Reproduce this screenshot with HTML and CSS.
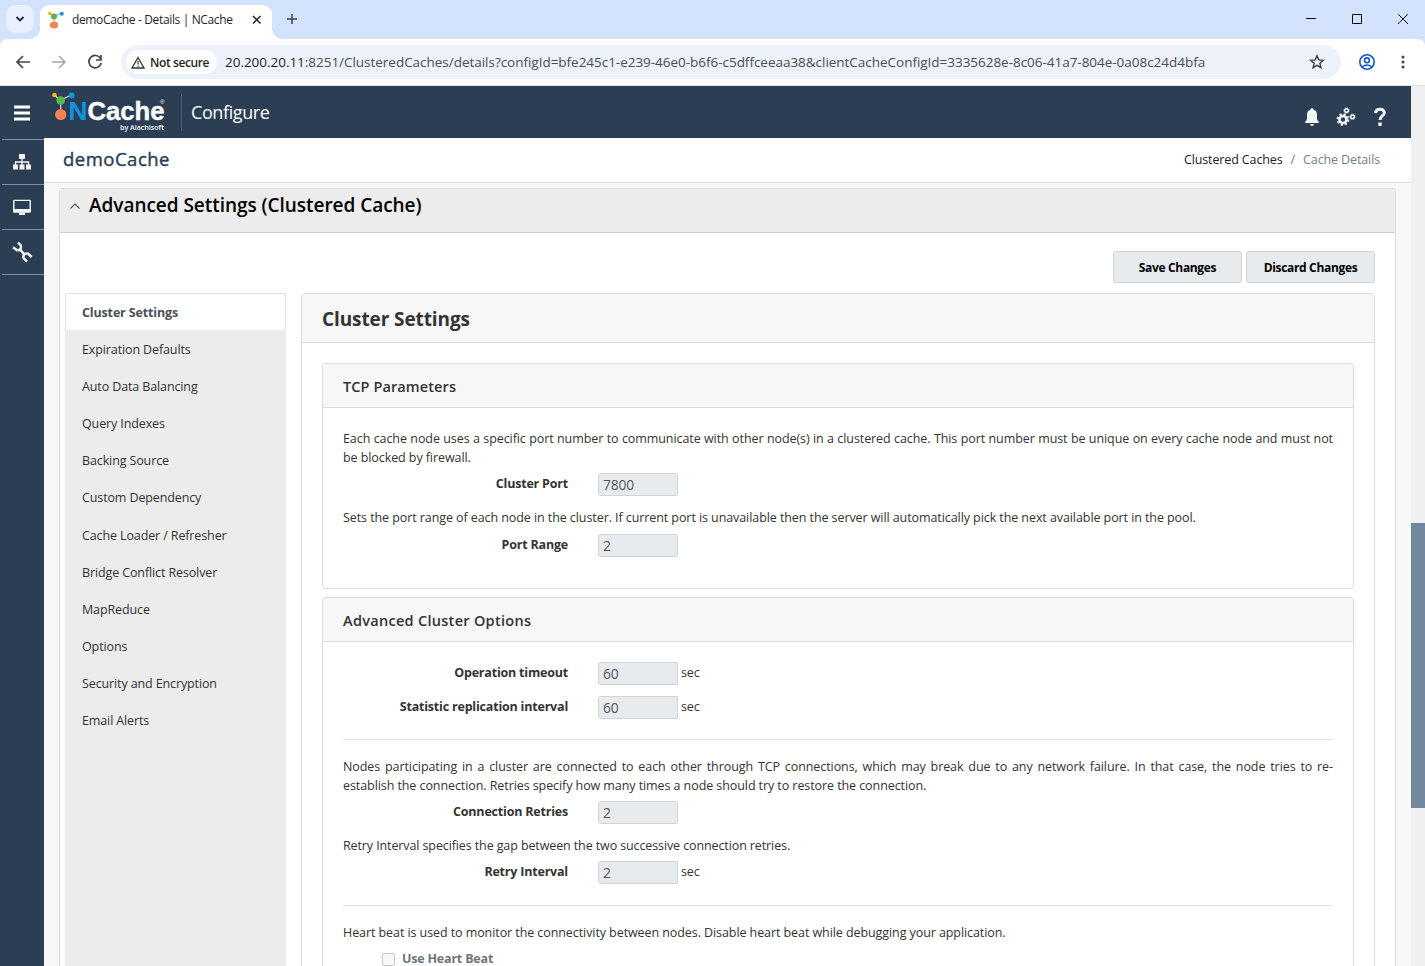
FILE: index.html
```html
<!DOCTYPE html>
<html lang="en">
<head>
<meta charset="utf-8">
<title>demoCache - Details | NCache</title>
<link rel="stylesheet" href="styles.css">
</head>
<body>
<div class="window">
  <div class="tabstrip">
    <div class="tab-search"><svg width="10" height="6" viewBox="0 0 10 6"><path d="M1.5 1l3.5 3.5L8.500 1" fill="none" stroke="#1f2a44" stroke-width="1.8"/></svg></div>
    <div class="tab">
      <svg class="favicon" width="18" height="18" viewBox="0 0 18 18"><path d="M2 2.500L6 5l7-2.500M6 5v8" stroke="#8aa" stroke-width="1" fill="none"/><circle cx="1.800" cy="2.500" r="1.700" fill="#f5b21a"/><circle cx="13.800" cy="2.700" r="2" fill="#1296e0"/><circle cx="6" cy="5.500" r="3" fill="#55b848"/><ellipse cx="6" cy="14" rx="4.200" ry="3.500" fill="#f58551"/></svg>
      <span class="tab-title">demoCache - Details | NCache</span>
      <svg class="tab-close" width="10" height="10" viewBox="0 0 10 10"><path d="M1 1l7.500 7.500M8.500 1L1 8.500" stroke="#222" stroke-width="1.500"/></svg>
    </div>
    <svg class="new-tab" width="12" height="12" viewBox="0 0 12 12"><path d="M6 1v10M1 6h10" stroke="#444" stroke-width="1.500"/></svg>
    <div class="win-buttons">
      <svg width="12" height="12" viewBox="0 0 12 12"><path d="M1 5.500h10" stroke="#000"/></svg>
      <svg width="12" height="12" viewBox="0 0 12 12"><path d="M1.500 1.500h9v9h-9z" fill="none" stroke="#000"/></svg>
      <svg width="12" height="12" viewBox="0 0 12 12"><path d="M1 1l10 10M11 1L1 11" stroke="#000"/></svg>
    </div>
  </div>
  <div class="toolbar">
    <svg class="t-back" width="16" height="16" viewBox="0 0 16 16"><path d="M15 8H2.500M8 2L2 8l6 6" fill="none" stroke="#474747" stroke-width="1.700"/></svg>
    <svg class="t-fwd" width="16" height="16" viewBox="0 0 16 16"><path d="M1 8h12.500M8 2l6 6-6 6" fill="none" stroke="#a5a5a5" stroke-width="1.500"/></svg>
    <svg class="t-reload" width="16" height="16" viewBox="0 0 16 16"><path d="M13.500 4.500A6.200 6.200 0 1 0 14.200 9M14 1v5H9" fill="none" stroke="#474747" stroke-width="1.700"/></svg>
    <div class="omnibox">
      <div class="chip"><svg width="14" height="13" viewBox="0 0 14 13"><path d="M7 1.500L13 12H1z" fill="none" stroke="#333" stroke-width="1.300"/><path d="M7 5v3.500M7 9.500v1.200" stroke="#333" stroke-width="1.200"/></svg><span class="chip-text">Not secure</span></div>
      <span class="url"><b>20.200.20.11</b>:8251/ClusteredCaches/details?configId=bfe245c1-e239-46e0-b6f6-c5dffceeaa38&amp;clientCacheConfigId=3335628e-8c06-41a7-804e-0a08c24d4bfa</span>
      <svg class="star" width="16" height="16" viewBox="0 0 16 16"><path d="M8 1.800l1.800 4.100 4.500.4-3.400 3 1 4.400L8 11.400l-3.900 2.300 1-4.400-3.400-3 4.500-.4z" fill="none" stroke="#444" stroke-width="1.500"/></svg>
    </div>
    <svg class="profile" width="18" height="18" viewBox="0 0 18 18"><g fill="none" stroke="#1558c9" stroke-width="1.600"><circle cx="9" cy="9" r="7.200"/><circle cx="9" cy="7.300" r="2.400"/><path d="M4 14q5-4 10 0"/></g></svg>
    <svg class="kebab" width="4" height="14" viewBox="0 0 4 14"><circle cx="2" cy="2" r="1.500" fill="#444"/><circle cx="2" cy="7" r="1.500" fill="#444"/><circle cx="2" cy="12" r="1.500" fill="#444"/></svg>
  </div>
  <div class="viewport">
    <div class="app">
      <header class="topbar">
        <svg class="burger" width="16" height="16" viewBox="0 0 16 16"><path d="M0 2h16M0 8h16M0 14h16" stroke="#fff" stroke-width="3"/></svg>
        <svg class="logo" width="116" height="42" viewBox="0 0 116 42"><path d="M3 3l6.500 5 11-5M9.700 8v14" stroke="#dce6ea" stroke-width="1.200" fill="none"/><circle cx="3.500" cy="3" r="2.300" fill="#fbb813"/><circle cx="20.500" cy="3.500" r="3" fill="#0d95e0"/><circle cx="9.700" cy="8.500" r="4.300" fill="#57b947"/><circle cx="9.700" cy="22.500" r="5.600" fill="#f58453"/><text class="logo-n" x="17.500" y="27.500" textLength="19" lengthAdjust="spacingAndGlyphs">N</text><text class="logo-cache" x="36.500" y="27.500" textLength="77" lengthAdjust="spacingAndGlyphs">Cache</text><text class="logo-r" x="109" y="11.500">®</text><text class="logo-by" x="69" y="38.300" textLength="44" lengthAdjust="spacingAndGlyphs">by Alachisoft</text></svg>
        <span class="section">Configure</span>
        <div class="top-icons">
          <svg width="16" height="20" viewBox="0 0 16 20"><path d="M8 1c1 0 1.300.6 1.300 1.500C12 3.200 13 5.300 13 8v3.500c0 1.500.8 2.300 2 3.500v1H1v-1c1.200-1.200 2-2 2-3.500V8c0-2.700 1-4.800 3.700-5.500C6.700 1.600 7 1 8 1z" fill="#f4f4f4"/><path d="M6 17h4q-.5 2-2 2t-2-2z" fill="#f4f4f4"/></svg>
          <svg width="20" height="20" viewBox="0 0 20 20"><g fill="none" stroke="#f4f4f4"><circle cx="7" cy="12.500" r="3.500" stroke-width="2.600"/><circle cx="7" cy="12.500" r="5.400" stroke-width="2" stroke-dasharray="2.100 2.140"/><circle cx="10.500" cy="3.500" r="1.800" stroke-width="1.500"/><circle cx="10.500" cy="3.500" r="2.700" stroke-width=".8" stroke-dasharray="1 1.120"/><circle cx="16.500" cy="9.800" r="1.800" stroke-width="1.500"/><circle cx="16.500" cy="9.800" r="2.700" stroke-width=".8" stroke-dasharray="1 1.120"/></g></svg>
          <svg class="help" width="14" height="20" viewBox="0 0 14 20"><path d="M2.500 6.200C2.700 3.500 4.200 2.200 7 2.200c2.600 0 4.300 1.200 4.300 3.500 0 3.400-4.300 3.200-4.300 7.300" fill="none" stroke="#f4f4f4" stroke-width="3"/><path d="M5.300 15.500h3.400v3.400H5.300z" fill="#f4f4f4"/></svg>
        </div>
      </header>
      <div class="below">
        <nav class="rail">
          <div class="rail-item"><svg width="20" height="18" viewBox="0 0 20 18"><path d="M7 1h6v5H7zM1 11.500h5v5H1zM7.500 11.500h5v5h-5zM14 11.500h5v5h-5z" fill="#f4f4f4"/><path d="M10 6v6M3.500 12V9h13v3" fill="none" stroke="#f4f4f4" stroke-width="1.300"/></svg></div>
          <div class="rail-item"><svg width="20" height="18" viewBox="0 0 20 18"><rect x="1" y="1.700" width="18" height="13" rx="1.200" fill="#f4f4f4"/><path d="M2.500 3h15v8h-15z" fill="#2a3e54"/><path d="M7 14.500h6v2.500H7z" fill="#f4f4f4"/></svg></div>
          <div class="rail-item"><svg width="22" height="22" viewBox="0 0 22 22"><g fill="none" stroke="#f4f4f4" stroke-width="2.500"><path d="M7 1.500L9.800 4.500Q10.500 6.500 9.500 8T6 9.300L2 6.200"/><path d="M9 8.500l4 4.500"/><path d="M20.700 16L17 12.700Q15 12 13.500 13.300T12.500 17L16 20.700"/></g></svg></div>
        </nav>
        <main class="content">
          <div class="crumbs"><h1>demoCache</h1><div class="trail"><span class="dark">Clustered Caches</span><span class="slash">/</span><span class="cur">Cache Details</span></div></div>
          <section class="panel">
            <div class="panel-head"><svg width="12" height="8" viewBox="0 0 12 8"><path d="M1.500 6.500L6 2l4.500 4.500" fill="none" stroke="#4a5663" stroke-width="1.100"/></svg><h2>Advanced Settings (Clustered Cache)</h2></div>
            <div class="actions"><button>Save Changes</button><button>Discard Changes</button></div>
            <div class="columns">
              <ul class="side">
                <li class="active">Cluster Settings</li><li>Expiration Defaults</li><li>Auto Data Balancing</li><li>Query Indexes</li><li>Backing Source</li><li>Custom Dependency</li><li>Cache Loader / Refresher</li><li>Bridge Conflict Resolver</li><li>MapReduce</li><li>Options</li><li>Security and Encryption</li><li>Email Alerts</li>
              </ul>
              <div class="card outer">
                <h3>Cluster Settings</h3>
                <div class="cards">
                  <div class="card tcp">
                    <h4>TCP Parameters</h4>
                    <div class="body-tcp">
                      <p>Each cache node uses a specific port number to communicate with other node(s) in a clustered cache. This port number must be unique on every cache node and must not be blocked by firewall.</p>
                      <div class="field"><label>Cluster Port</label><div class="input">7800</div></div>
                      <p class="single">Sets the port range of each node in the cluster. If current port is unavailable then the server will automatically pick the next available port in the pool.</p>
                      <div class="field lower"><label>Port Range</label><div class="input">2</div></div>
                    </div>
                  </div>
                  <div class="card adv">
                    <h4>Advanced Cluster Options</h4>
                    <div class="body-adv">
                      <div class="field first"><label>Operation timeout</label><div class="input joined">60</div><span class="unit">sec</span></div>
                      <div class="field second"><label>Statistic replication interval</label><div class="input joined">60</div><span class="unit">sec</span></div>
                      <div class="rule"></div>
                      <p>Nodes participating in a cluster are connected to each other through TCP connections, which may break due to any network failure. In that case, the node tries to re-establish the connection. Retries specify how many times a node should try to restore the connection.</p>
                      <div class="field"><label>Connection Retries</label><div class="input">2</div></div>
                      <p class="single retry">Retry Interval specifies the gap between the two successive connection retries.</p>
                      <div class="field"><label>Retry Interval</label><div class="input joined">2</div><span class="unit">sec</span></div>
                      <div class="rule last"></div>
                      <p>Heart beat is used to monitor the connectivity between nodes. Disable heart beat while debugging your application.</p>
                      <div class="check"><span class="box"></span><span class="check-label">Use Heart Beat</span></div>
                    </div>
                  </div>
                </div>
              </div>
            </div>
          </section>
        </main>
      </div>
    </div>
    <div class="scrollbar"><div class="thumb"></div></div>
  </div>
</div>
</body>
</html>
```
FILE: styles.css
```css
* { box-sizing: border-box; }
body { margin: 0; font-family: "Open Sans", "Noto Sans", sans-serif; font-size: 12.5px; color: #333; }
h1, h2, h3, h4, p, ul { margin: 0; padding: 0; }
svg { display: block; flex: none; }
.window { width: 1425px; height: 966px; overflow: hidden; display: flex; flex-direction: column; white-space: nowrap; background: #d3e2fd; }

/* browser chrome */
.tabstrip { height: 39px; flex: none; background: #d3e2fd; display: flex; align-items: flex-start; padding-left: 6px; }
.tab-search { width: 28px; height: 28px; margin-top: 5px; border-radius: 9px; background: #e9f0fe; display: flex; align-items: center; justify-content: center; }
.tab { position: relative; width: 232px; height: 34px; margin: 5px 0 0 6px; background: #fff; border-radius: 9px 9px 0 0; display: flex; align-items: center; padding: 0 10px 5px 8px; }
.tab::before, .tab::after { content: ""; position: absolute; bottom: 0; width: 10px; height: 10px; }
.tab::before { left: -10px; background: radial-gradient(circle at 0 0, transparent 9.5px, #fff 10px); }
.tab::after { right: -10px; background: radial-gradient(circle at 100% 0, transparent 9.5px, #fff 10px); }
.tab-title { margin-left: 6px; font-size: 12px; letter-spacing: -0.36px; color: #1f1f1f; }
.tab-close { margin-left: auto; }
.new-tab { margin: 13px 0 0 14px; }
.win-buttons { display: flex; gap: 34px; margin: 13px 16px 0 auto; }
.toolbar { height: 47px; flex: none; background: #fff; border-bottom: 1px solid #dfe3dd; border-radius: 7px 7px 0 0; display: flex; align-items: center; padding-left: 15px; }
.t-fwd { margin-left: 20px; }
.t-reload { margin-left: 20px; }
.omnibox { width: 1220px; height: 34px; margin-left: 18px; border-radius: 17px; background: #edf1fa; display: flex; align-items: center; padding: 0 16px 0 5px; }
.chip { width: 91px; height: 24px; border-radius: 12px; background: #fff; display: flex; align-items: center; padding-left: 5px; }
.chip-text { margin-left: 5px; font-size: 12px; font-weight: 600; letter-spacing: -0.4px; color: #1f1f1f; }
.url { margin-left: 8px; font-size: 13.500px; letter-spacing: -0.027px; color: #4a4e53; }
.url b { font-weight: 400; color: #1f1f1f; }
.star { margin-left: auto; }
.profile { margin-left: 17px; }
.kebab { margin-left: 25px; }

/* page */
.viewport { flex: 1; min-height: 0; display: flex; }
.app { width: 1411px; display: flex; flex-direction: column; }
.scrollbar { width: 14px; background: #f0f0f0; }
.thumb { height: 285px; margin-top: 437px; background: #73879c; }
.topbar { height: 52px; flex: none; background: #2b3e54; display: flex; align-items: center; padding-left: 14px; color: #fff; }
.burger { margin-top: 2px; }
.logo { margin: 2px 0 0 21px; }
.logo text { font-family: "Liberation Sans", sans-serif; fill: #fff; }
.logo .logo-n { font-size: 25.500px; font-weight: 700; fill: #0d95e0; }
.logo .logo-cache { font-size: 25.500px; font-weight: 700; stroke: #fff; stroke-width: 0.4px; }
.logo .logo-r { font-size: 6px; }
.logo .logo-by { font-family: "Open Sans", sans-serif; font-size: 7.200px; font-weight: 600; }
.section { height: 37px; margin-left: 14px; padding-left: 9px; border-left: 1px solid #4c6178; line-height: 36px; font-size: 18px; letter-spacing: -0.4px; }
.top-icons { display: flex; gap: 16px; margin: 10px 24px 0 auto; }
.help { margin-left: 1px; }
.below { flex: 1; min-height: 0; display: flex; }
.rail { width: 44px; flex: none; background: #2b3e54; padding-left: 2px; }
.rail-item { height: 45px; padding-right: 2px; border-top: 1px solid #7d90a4; display: flex; align-items: center; justify-content: center; }
.rail-item:first-child { margin-top: 1px; }
.rail-item:last-child { height: 46px; border-bottom: 1px solid #7d90a4; }
.content { flex: 1; min-width: 0; background: #f7f7f7; display: flex; flex-direction: column; }
.crumbs { height: 45px; flex: none; background: #fff; border-bottom: 1px solid #d9dfe6; display: flex; justify-content: space-between; padding: 0 31px 0 19px; }
.crumbs h1 { font-size: 18.500px; font-weight: 500; line-height: 42px; letter-spacing: 0.5px; color: #2b3e54; -webkit-text-stroke: 0.4px #2b3e54; }
.trail { display: flex; line-height: 43px; letter-spacing: -0.12px; }
.trail .dark { color: #222; }
.trail .slash { margin: 0 8px; color: #6c757d; }
.trail .cur { color: #748089; }
.panel { flex: 1; margin: 5px 15px 0; background: #fff; border: 1px solid #dcdcdc; border-bottom: 0; border-radius: 4px 4px 0 0; display: flex; flex-direction: column; min-height: 0; }
.panel-head { height: 44px; flex: none; background: #ececec; border-bottom: 1px solid #cfcfcf; display: flex; align-items: flex-start; padding-left: 9px; }
.panel-head svg { margin-top: 13px; }
.panel-head h2 { margin-left: 8px; font-size: 19px; font-weight: 600; line-height: 33px; letter-spacing: -0.04px; color: #000; }
.actions { display: flex; justify-content: flex-end; gap: 4px; margin: 18px 20px 10px; }
button { width: 129px; height: 32px; padding: 0; background: #e8ebee; border: 1px solid #ced4da; border-radius: 3px; font: 700 12px "Open Sans", sans-serif; letter-spacing: -0.33px; color: #000; }
.columns { flex: 1; min-height: 0; display: flex; padding-left: 5px; gap: 15px; }
.side { width: 221px; flex: none; list-style: none; background: #ececec; }
.side li { height: 37.120px; line-height: 40px; padding-left: 17px; letter-spacing: -0.12px; }
.side .active { height: 37px; line-height: 38px; padding-left: 16px; background: #fff; border: 1px solid #dee2e6; border-bottom: 0; border-radius: 3px 3px 0 0; font-weight: 700; color: #495057; letter-spacing: -0.15px; }
.card { background: #fff; border: 1px solid #dcdcdc; border-radius: 4px; }
.outer { width: 1074px; height: 720px; }
h3 { height: 49px; background: #f7f7f7; border-bottom: 1px solid #dcdcdc; border-radius: 4px 4px 0 0; padding-left: 20px; font-size: 19px; line-height: 50px; letter-spacing: -0.1px; }
.cards { padding: 20px 20px 0; display: flex; flex-direction: column; gap: 8px; }
h4 { height: 44px; background: #f7f7f7; border-bottom: 1px solid #dcdcdc; border-radius: 4px 4px 0 0; padding-left: 20px; font-size: 14.500px; font-weight: 600; line-height: 45px; letter-spacing: 0.29px; }
.tcp h4 { letter-spacing: 0.1px; }
.tcp { height: 226px; }
.adv { height: 480px; }
.body-tcp { padding: 21px 20px 0; }
.body-adv { padding: 20px 20px 0; }
p { line-height: 19px; text-align: justify; white-space: normal; letter-spacing: -0.08px; }
p.retry { letter-spacing: -0.11px; }
.field { height: 23px; margin-top: 6px; display: flex; }
.field.lower { margin-top: 7px; }
.field.first { margin-top: 0; }
.field.second { margin-top: 11px; }
.field label { width: 225px; margin-right: 30px; text-align: right; font-weight: 700; line-height: 22px; letter-spacing: -0.2px; }
.input { width: 80px; height: 23px; padding-left: 4px; background: #e8ebee; border: 1px solid #ced4da; border-radius: 3px; font-size: 13.800px; line-height: 21px; letter-spacing: -0.15px; color: #50575e; }
.input.joined { border-radius: 3px 0 0 3px; }
.unit { margin-left: 3px; line-height: 22px; letter-spacing: -0.1px; }
.single { margin-top: 12px; }
.rule { height: 1px; margin: 20px 0 17px; background: #e3e3e3; }
.rule.last { margin-top: 21px; }
.check { display: flex; padding-left: 39px; margin-top: 7px; }
.box { width: 13px; height: 13px; margin-top: 4px; border: 1px solid #c8c8c8; border-radius: 2px; background: #f8f8f8; }
.check-label { margin-left: 7px; line-height: 19px; font-weight: 700; letter-spacing: -0.2px; color: #6c757d; }
```
